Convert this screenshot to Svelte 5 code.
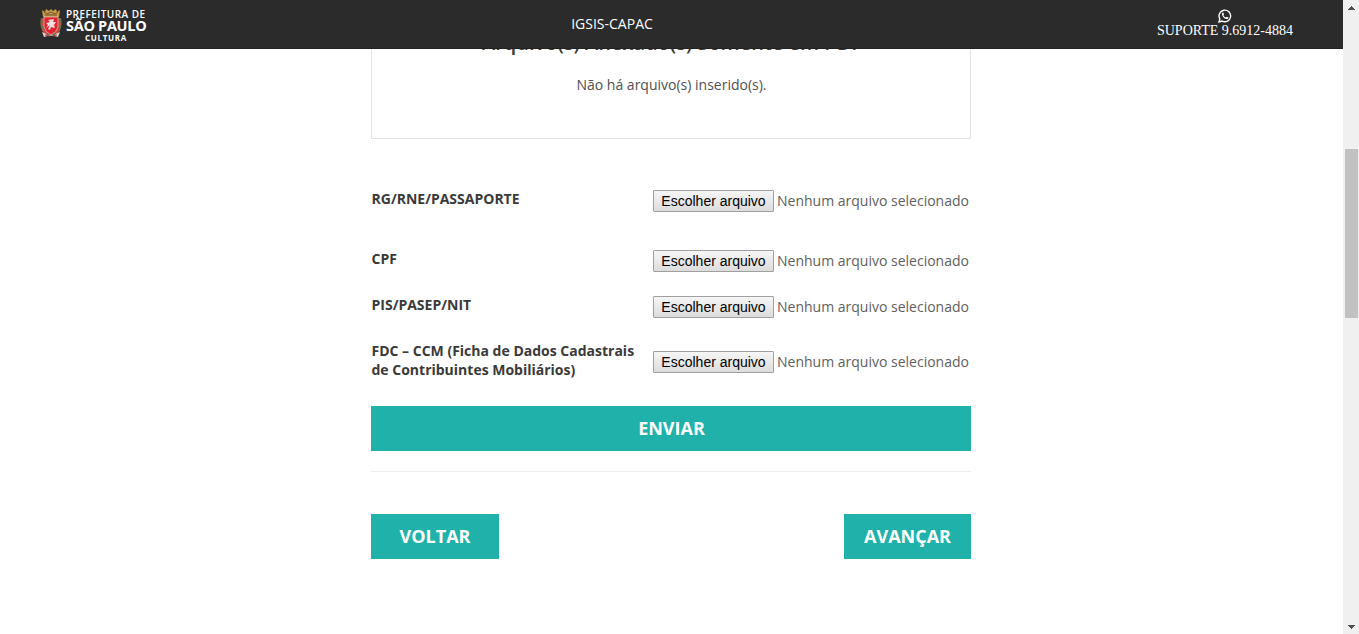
<script>
  const files = [
    { lines: ['RG/RNE/PASSAPORTE'], kind: 'tall' },
    { lines: ['CPF'], kind: '' },
    { lines: ['PIS/PASEP/NIT'], kind: '' },
    { lines: ['FDC – CCM (Ficha de Dados Cadastrais', 'de Contribuintes Mobiliários)'], kind: 'double' }
  ];
</script>

<div class="window">
  <div class="view">
    <header>
      <div class="brand">
        <svg class="crest" width="22" height="29" viewBox="0 0 22 29">
          <path d="M1 9 Q-1 17 3 23 L8 27 L14 27 L19 23 Q23 17 21 9Z" fill="#5f7650" />
          <path d="M2 10 L5 12 L2 15 L5 18 L3 21 L7 25 M20 10 L17 12 L20 15 L17 18 L19 21 L15 25" fill="none" stroke="#d4473e" stroke-width="2" />
          <path d="M2 1 L5 3 L6 0 L9 2 L11 0 L13 2 L16 0 L17 3 L20 1 L19 8 H3Z" fill="#ca9a48" />
          <path d="M4 3 L7 5 L11 3 L15 5 L18 3 M5 6 H17" fill="none" stroke="#71552c" />
          <path d="M4 8 H18 V18 Q17 23 11 26 Q5 23 4 18Z" fill="#e4232f" stroke="#d9c5bd" stroke-width=".7" />
          <path d="M6 19 L8 16 L6 14 L10 13 L8 11 L14 10 L13 13 L16 13 L14 16 L15 19 L11 18 L10 21 L8 20 L10 16Z" fill="#f4dedd" />
          <path d="M2 23 Q6 24 8 27 H14 Q16 24 20 23 L18 28 Q11 25 4 28Z" fill="#d9d5cf" />
          <path d="M5 26 L9 27 M13 27 L17 26" stroke="#d52f38" />
        </svg>
        <div class="name">
          <span class="pref">PREFEITURA DE</span>
          <span class="city">SÃO PAULO</span>
          <span class="dept">CULTURA</span>
        </div>
      </div>
      <div class="title">IGSIS-CAPAC</div>
      <div class="support">
        <svg width="14" height="14" viewBox="0 0 14 14">
          <path d="M1 13 L1.8 9.8 A5.8 5.8 0 1 1 4.2 12.1Z" fill="none" stroke="#fff" stroke-width="1.4" />
          <path d="M4.8 3.5 C3.2 4.7 4 6.7 5.6 8.4 C7.4 10.1 9.4 10.8 10.3 9.3 L10.4 8.5 L8.7 7.7 L7.9 8.6 Q6.2 7.9 5.3 6.3 L6 5.5 L5.4 3.7Z" fill="#fff" />
        </svg>
        <span>SUPORTE 9.6912-4884</span>
      </div>
    </header>
    <main>
      <section class="attached">
        <h6><span>Arquivo(s) Anexado(s) Somente em PDF</span></h6>
        <p><span>Não há arquivo(s) inserido(s).</span></p>
      </section>
      <form>
        {#each files as f}
          <div class="row {f.kind}">
            <div class="label">{#each f.lines as l}<span>{l}</span>{/each}</div>
            <div class="file">
              <button type="button">Escolher arquivo</button>
              <span>Nenhum arquivo selecionado</span>
            </div>
          </div>
        {/each}
        <button type="button" class="cta send">ENVIAR</button>
      </form>
      <hr />
      <nav>
        <button type="button" class="cta back">VOLTAR</button>
        <button type="button" class="cta next">AVANÇAR</button>
      </nav>
    </main>
  </div>
  <div class="bar">
    <svg width="7" height="4" viewBox="0 0 7 4" shape-rendering="crispEdges"><path d="M3 0h1v1h1v1h1v1h1v1H0V3h1V2h1V1h1z" fill="#505050" /></svg>
    <div class="thumb"></div>
    <svg width="7" height="4" viewBox="0 0 7 4" shape-rendering="crispEdges"><path d="M0 0h7v1H6v1H5v1H4v1H3V3H2V2H1V1H0z" fill="#505050" /></svg>
  </div>
</div>

<style>
  :global(body) { background: #fff; overflow: hidden; }
  .window { display: flex; height: 634px; font-family: "Open Sans", sans-serif; color: #3a3a3a; }
  .view { flex: 1; overflow: hidden; }
  header {
    height: 49px; box-sizing: border-box; background: #2b2b2b; color: #fff;
    border-bottom: 1px solid #222;
    display: grid; grid-template-columns: 532px 160px 1fr;
  }
  .brand { display: flex; padding: 9px 0 0 40px; gap: 4px; }
  .name { display: flex; flex-direction: column; width: 80px; white-space: nowrap; font-family: "Open Sans", sans-serif; font-weight: 600; }
  .pref { font-size: 10px; line-height: 10px; letter-spacing: .45px; }
  .city { font-size: 14.5px; line-height: 14px; font-weight: 700; letter-spacing: -.3px; }
  .dept { font-size: 8px; line-height: 9px; letter-spacing: .7px; padding-left: 19px; font-weight: 700; }
  .title { font-size: 14px; line-height: 20px; padding-top: 14px; text-align: center; letter-spacing: 0; }
  .support {
    width: 137px; margin-left: 464.5px; padding-top: 9px; white-space: nowrap;
    display: flex; flex-direction: column; align-items: center;
    font: 14px/15px "Liberation Serif", serif;
  }
  main { display: flow-root; width: 600px; margin-left: 371px; height: 585px; overflow: hidden; }
  .attached { display: flow-root; height: 90px; box-sizing: border-box; border: 1px solid #e4e3df; border-top: 0; text-align: center; }
  h6 { margin: -20px 0 0; padding-left: 2px; font-size: 20px; line-height: 28px; font-weight: 600; letter-spacing: 0; }
  p { margin: 18px 0 0; padding-left: 1px; font-size: 14px; line-height: 20px; font-weight: 400; color: #505050; }
  form { padding-top: 50px; }
  .row { height: 46px; display: flex; justify-content: space-between; }
  .tall { height: 60px; }
  .double { height: 67px; }
  .label { display: flex; flex-direction: column; align-items: flex-start; font-size: 14px; line-height: 19px; font-weight: 700; padding-left: .5px; white-space: nowrap; }
  .file { display: flex; gap: 3px; width: 318px; margin-top: 1px; height: 22px; font-size: 14px; line-height: 21px; font-weight: 400; color: #606060; white-space: nowrap; }
  .double .file { margin-top: 10px; }
  .file button {
    width: 121px; height: 22px; padding: 0; border: 1px solid #a0a0a0; border-radius: 1px; flex: none;
    background: linear-gradient(#f6f6f6, #dcdcdc); color: #000; font: 14px/20px "Liberation Sans", sans-serif;
  }
  .cta { border: 0; border-radius: 0; background: #20b2aa; color: #fff; height: 45px; padding: 0; font: 700 18px/45px "Open Sans", sans-serif; }
  .send { display: block; width: 600px; margin-top: -2px; padding-left: 1px; }
  hr { border: 0; border-top: 1px solid #eee; margin: 20px 0 42px; }
  nav { display: flex; justify-content: space-between; }
  .back { width: 128px; }
  .next { width: 127px; }
  .bar { width: 16px; height: 634px; background: #f0f0f0; display: flex; flex-direction: column; align-items: center; box-sizing: border-box; padding: 6px 0 5px; }
  .thumb { width: 13px; height: 169px; background: #c1c1c1; margin: 139px 0 auto 0; }
</style>
